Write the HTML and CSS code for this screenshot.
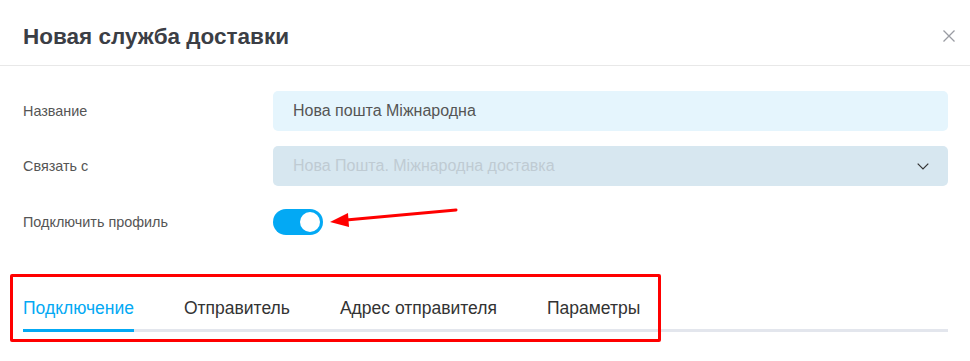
FILE: index.html
```html
<!DOCTYPE html>
<html lang="ru">

<head>
  <meta charset="UTF-8" />
  <meta name="viewport" content="width=device-width, initial-scale=1.0" />
  <title>Новая служба доставки</title>
  <link rel="stylesheet" href="styles.css">
</head>

<body>
  <div class="modal">
    <div class="modal-header">
      <h1 class="modal-title">Новая служба доставки</h1>
      <button class="close-btn" aria-label="Закрыть">
        <svg width="12" height="12" viewBox="0 0 12 12">
          <path d="M0.5 0.5 L11.5 11.5 M11.5 0.5 L0.5 11.5" stroke="#9a9ca3" stroke-width="1.3" fill="none" />
        </svg>
      </button>
    </div>

    <div class="modal-body">
      <div class="form-row">
        <label class="form-label">Название</label>
        <div class="input-field">Нова пошта Міжнародна</div>
      </div>
      <div class="form-row">
        <label class="form-label">Связать с</label>
        <div class="input-field select-field">
          <span class="placeholder">Нова Пошта. Міжнародна доставка</span>
          <svg width="12" height="7" viewBox="0 0 12 7">
            <path d="M0.7 0.7 L6 6 L11.3 0.7" stroke="#333" stroke-width="1.2" fill="none" />
          </svg>
        </div>
      </div>
      <div class="form-row toggle-row">
        <label class="form-label">Подключить профиль</label>
        <div class="toggle on"><span class="toggle-knob"></span></div>
        <svg class="annotation-arrow" width="130" height="24" viewBox="0 0 130 24">
          <path d="M128 3 L18 13" stroke="#f00" stroke-width="3" stroke-linecap="round" fill="none" />
          <path d="M2 15 L20 6 L21 20 Z" fill="#f00" />
        </svg>
      </div>

      <div class="tabs">
        <div class="tab active">Подключение</div>
        <div class="tab">Отправитель</div>
        <div class="tab">Адрес отправителя</div>
        <div class="tab">Параметры</div>
        <div class="annotation-box"></div>
      </div>
    </div>
  </div>
</body>

</html>
```

FILE: styles.css
```css
:root {
  --color-title: #3b3e45;
  --color-text: #555;
  --color-border: #e8e8e8;
  --color-input-bg: #e5f5fd;
  --color-select-bg: #d7e7f0;
  --color-placeholder: #bfcbd3;
  --color-primary: #03a9f4;
  --color-tab-line: #e3e6ed;
  --font-base: "Liberation Sans", Arial, sans-serif;
}

* {
  box-sizing: border-box;
  margin: 0;
  padding: 0;
}

body {
  font-family: var(--font-base);
  background-color: #fff;
  color: var(--color-text);
}

.modal {
  width: 970px;
  height: 361px;
  overflow: hidden;
}

.modal-header {
  display: flex;
  justify-content: space-between;
  align-items: center;
  height: 66px;
  padding: 0 15px 0 23px;
  border-bottom: 1px solid var(--color-border);
}

.modal-title {
  font-size: 22.5px;
  font-weight: 700;
  color: var(--color-title);
  padding-top: 8px;
}

.close-btn {
  border: none;
  background: none;
  cursor: pointer;
  display: flex;
  padding: 0;
  margin-top: 6px;
}

.modal-body {
  padding: 25px 22px 0 23px;
}

.form-row {
  display: flex;
  align-items: center;
  height: 40px;
  margin-bottom: 15px;
  position: relative;
}

.form-label {
  width: 250px;
  flex-shrink: 0;
  font-size: 14.4px;
  color: #555;
}

.input-field {
  flex: 1;
  height: 40px;
  display: flex;
  align-items: center;
  padding: 0 19px 0 20px;
  background-color: var(--color-input-bg);
  border-radius: 5px;
  font-size: 16px;
  color: #555;
}

.select-field {
  justify-content: space-between;
  background-color: var(--color-select-bg);
}

.placeholder {
  color: var(--color-placeholder);
}

.toggle-row {
  height: 30px;
  margin-top: 21px;
}

.toggle {
  width: 50px;
  height: 26px;
  border-radius: 13px;
  background-color: var(--color-primary);
  position: relative;
}

.toggle-knob {
  position: absolute;
  top: 3px;
  right: 3px;
  width: 20px;
  height: 20px;
  border-radius: 50%;
  background-color: #fff;
}

.annotation-arrow {
  position: absolute;
  left: 305px;
  top: 0;
}

.tabs {
  position: relative;
  display: flex;
  gap: 50px;
  margin-top: 61px;
  border-bottom: 3px solid var(--color-tab-line);
}

.tab {
  font-size: 17.5px;
  color: #333;
  padding-bottom: 10px;
  margin-bottom: -3px;
  border-bottom: 3px solid transparent;
}

.tab.active {
  color: var(--color-primary);
  border-bottom-color: var(--color-primary);
}

.annotation-box {
  position: absolute;
  left: -13px;
  top: -24px;
  width: 651px;
  height: 68px;
  border: 3px solid #f00;
  border-radius: 2px;
}
```
